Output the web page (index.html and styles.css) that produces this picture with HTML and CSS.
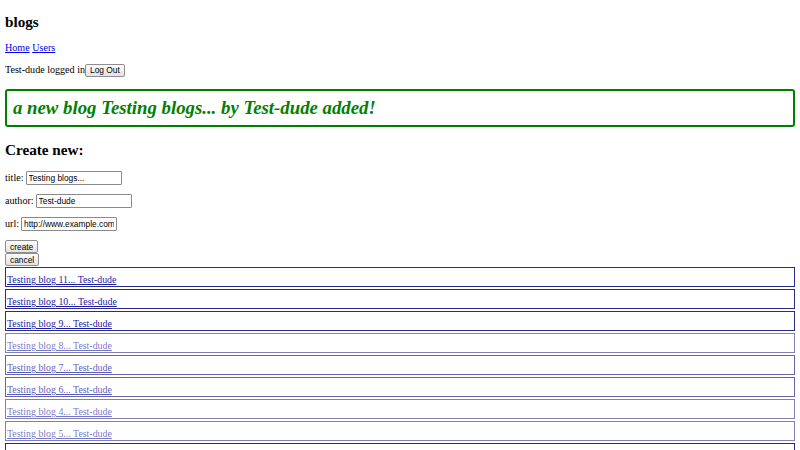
FILE: index.html
```html
<!DOCTYPE html>
<html>
<head>
<meta charset="utf-8">
<link rel="stylesheet" href="styles.css">
</head>
<body>
<div class="app">
  <h2 class="title title-top">blogs</h2>
  <div class="nav"><a href="#">Home</a> <a href="#">Users</a></div>
  <p class="login">Test-dude logged in<button class="btn">Log Out</button></p>
  <div class="notification">a new blog Testing blogs... by Test-dude added!</div>
  <h2 class="title">Create new:</h2>
  <form class="form">
    <div class="field">title: <input class="input" value="Testing blogs..."></div>
    <div class="field">author: <input class="input" value="Test-dude"></div>
    <div class="field">url: <input class="input" value="http://www.example.com"></div>
    <div class="actions">
      <button type="button" class="btn">create</button>
      <button type="button" class="btn">cancel</button>
    </div>
  </form>
  <div class="blogs">
    <div class="blog"><a href="#">Testing blog 11... Test-dude</a></div>
    <div class="blog"><a href="#">Testing blog 10... Test-dude</a></div>
    <div class="blog"><a href="#">Testing blog 9... Test-dude</a></div>
    <div class="blog fade-2"><a href="#">Testing blog 8... Test-dude</a></div>
    <div class="blog fade-1"><a href="#">Testing blog 7... Test-dude</a></div>
    <div class="blog fade-1"><a href="#">Testing blog 6... Test-dude</a></div>
    <div class="blog fade-2"><a href="#">Testing blog 4... Test-dude</a></div>
    <div class="blog fade-2"><a href="#">Testing blog 5... Test-dude</a></div>
    <div class="blog"><a href="#">Testing blog 3... Test-dude</a></div>
  </div>
</div>
</body>
</html>
```
FILE: styles.css
```css
body {
  margin: 5px;
  font-family: "Liberation Serif", "Times New Roman", serif;
  font-size: 10.1px;
  line-height: 12px;
  color: #000;
  background: #fff;
}
a {
  color: #0000ee;
}
.app {
  padding-top: 8px;
}
.title {
  font-size: 15.2px;
  line-height: 18px;
  font-weight: bold;
  margin: 0 0 12px;
}
.title-top {
  margin-bottom: 11px;
}
.nav {
  margin: 0 0 9px;
}
.login {
  margin: 0 0 12px;
  display: flex;
  align-items: center;
  height: 14px;
}
.btn {
  display: block;
  font-family: "Liberation Sans", Arial, sans-serif;
  font-size: 8.4px;
  line-height: 10px;
  color: #000;
  background: linear-gradient(#fbfbfb, #e3e3e3);
  border: 1px solid #8f8f8f;
  border-radius: 2px;
  padding: 0 4px;
  margin: 0;
  height: 13px;
}
.notification {
  color: green;
  font-size: 18.8px;
  line-height: 22px;
  font-style: italic;
  font-weight: bold;
  border: 2px solid green;
  border-radius: 3px;
  padding: 6px;
  margin-bottom: 14px;
}
.form {
  margin: 0;
  display: flex;
  flex-direction: column;
  gap: 9px;
}
.field {
  display: flex;
  align-items: center;
  gap: 2px;
  height: 14px;
}
.input {
  box-sizing: border-box;
  font-family: "Liberation Sans", Arial, sans-serif;
  font-size: 8.4px;
  border: 1px solid #8a8a8a;
  border-radius: 1px;
  padding: 0 2px;
  width: 96px;
  height: 14px;
}
.actions {
  margin-bottom: 1px;
  display: flex;
  flex-direction: column;
  align-items: flex-start;
}
.blog {
  height: 12px;
  padding-top: 6px;
  padding-left: 1px;
  border: 1px solid #2a2a8c;
  margin-bottom: 2px;
}
.blog a {
  color: #1c1ca6;
  font-size: 9.9px;
}
.fade-1 {
  opacity: 0.72;
}
.fade-2 {
  opacity: 0.6;
}
```
